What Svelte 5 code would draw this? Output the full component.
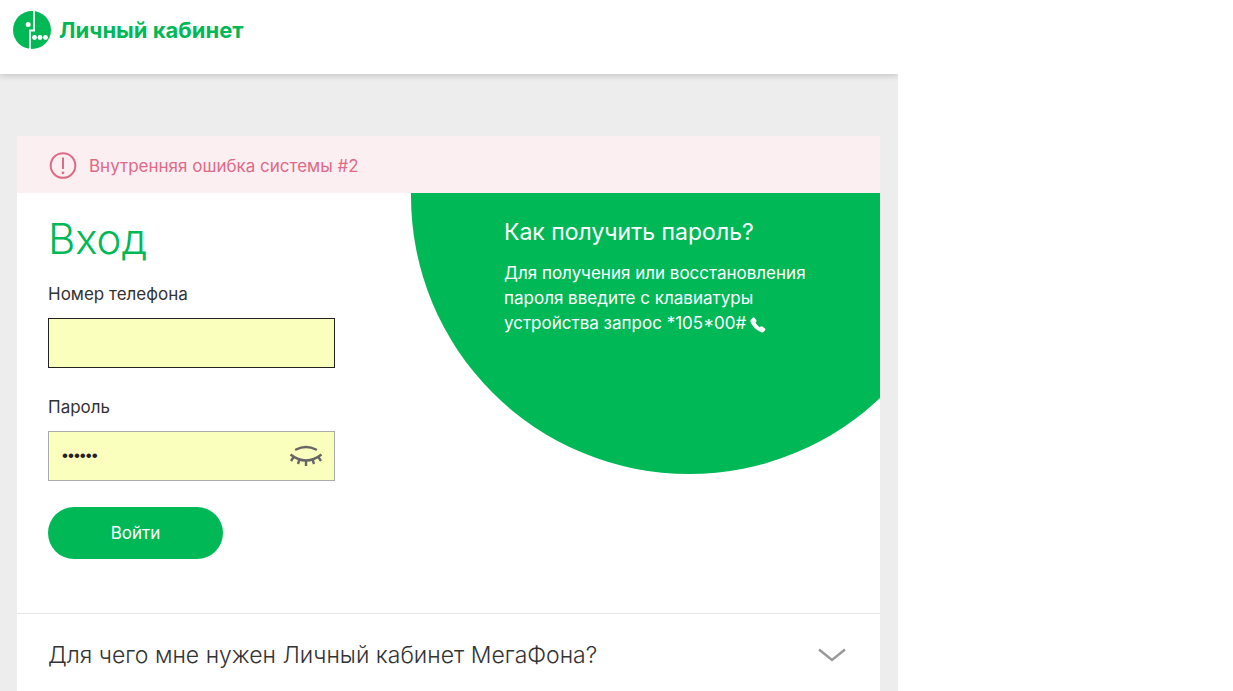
<script lang="ts">
  let phone = $state("");
  let password = $state("123456");
  let showPassword = $state(false);
  let faqOpen = $state(false);
</script>

<svelte:head>
  <title>Личный кабинет</title>
</svelte:head>

<div class="page">
  <header class="header">
    <a href="/" class="logo">
      <svg class="logo-icon" viewBox="0 0 38 38" aria-hidden="true">
        <circle cx="19" cy="19" r="19" fill="#00b956" />
        <path d="M21 0V19.500H17V38" fill="none" stroke="#fff" stroke-width="1.800" />
        <g fill="#fff">
          <circle cx="15.200" cy="13.500" r="2.500" />
          <circle cx="21.500" cy="26.500" r="2.400" />
          <circle cx="27" cy="26.500" r="2.400" />
          <circle cx="32.500" cy="26.500" r="2.400" />
        </g>
      </svg>
      <span>Личный кабинет</span>
    </a>
  </header>

  <main class="card">
    <div class="alert" role="alert">
      <svg class="alert-icon" viewBox="0 0 28 28" fill="none" stroke="currentColor" aria-hidden="true">
        <circle cx="14" cy="13.500" r="12.300" stroke-width="2" />
        <path d="M14 5.500V17" stroke-width="2" />
        <circle cx="14" cy="20.800" r="1.400" fill="currentColor" stroke="none" />
      </svg>
      <span>Внутренняя ошибка системы #2</span>
    </div>

    <div class="login">
      <form class="form" onsubmit={(e) => e.preventDefault()}>
        <h1>Вход</h1>

        <label for="phone">Номер телефона</label>
        <input id="phone" class="input input-active" type="tel" bind:value={phone} />

        <label for="password">Пароль</label>
        <div class="password">
          <input
            id="password"
            class="input"
            type={showPassword ? "text" : "password"}
            bind:value={password}
          />
          <button
            type="button"
            class="eye"
            aria-label="Показать пароль"
            onclick={() => (showPassword = !showPassword)}
          >
            <svg viewBox="0 0 34 24" fill="none" stroke="currentColor" stroke-width="2.400" aria-hidden="true">
              <path d="M7 5.500Q17 0.500 27 5.500" stroke-linecap="round" />
              <path d="M1.500 10.500Q17 22.500 32.500 10.500" />
              <path d="M5 12.500L2 17M10.500 15.500L9 20M17 16.500V22M23.500 15.500L25 20M29 12.500L32 17" />
            </svg>
          </button>
        </div>

        <button type="submit" class="submit">Войти</button>
      </form>

      <section class="hint">
        <div class="hint-text">
          <h2>Как получить пароль?</h2>
          <p>
            Для получения или восстановления пароля введите с клавиатуры устройства запрос *105*00#<svg
              class="phone-icon"
              viewBox="0 0 16 16"
              aria-hidden="true"
            >
              <path
                d="M1.200 2.300L3 0.600Q3.800 0 4.500 0.800L6.300 3.300Q6.800 4.100 6.200 4.800L5.500 5.800Q7 8.400 9.700 10.300L10.800 9.500Q11.500 9 12.200 9.500L15 11.400Q15.800 12.100 15.200 12.900L13.800 14.700Q12.900 15.800 11.200 15.200Q3.200 11.800 0.500 4.700Q0 3.300 1.200 2.300Z"
                fill="currentColor"
              />
            </svg>
          </p>
        </div>
      </section>
    </div>

    <button type="button" class="faq" aria-expanded={faqOpen} onclick={() => (faqOpen = !faqOpen)}>
      <span>Для чего мне нужен Личный кабинет МегаФона?</span>
      <svg class="chevron" class:open={faqOpen} viewBox="0 0 28 14" aria-hidden="true">
        <path d="M1 1.500L14 12L27 1.500" fill="none" stroke="currentColor" stroke-width="2.400" />
      </svg>
    </button>
  </main>
</div>

<style>
  :global(body) {
    background: #fff;
  }

  .page {
    box-sizing: border-box;
    min-height: 100vh;
    margin-right: 335px;
    display: flex;
    flex-direction: column;
    overflow: hidden;
    background: #ededed;
    color: #333;
    font-family: Inter, "Liberation Sans", sans-serif;
    font-size: 17px;
    line-height: 25px;
  }

  h1,
  h2,
  p {
    margin: 0;
  }

  button {
    font-family: inherit;
    border: none;
    cursor: pointer;
  }

  /* Header */
  .header {
    height: 74px;
    padding: 0 13px;
    background: #fff;
    box-shadow: 0 2px 6px rgba(0, 0, 0, 0.16);
  }

  .logo {
    display: inline-flex;
    align-items: center;
    gap: 8px;
    height: 60px;
    color: #00b956;
    font-size: 22px;
    font-weight: 700;
    text-decoration: none;
  }

  .logo-icon {
    width: 38px;
    height: 38px;
  }

  /* Card */
  .card {
    flex: 1;
    display: flex;
    flex-direction: column;
    margin: 62px 18px 0 17px;
    background: #fff;
  }

  .alert {
    display: flex;
    align-items: center;
    gap: 12px;
    padding: 16px 32px 13px;
    background: #fceff1;
    color: #dd6b88;
  }

  .alert-icon {
    width: 28px;
    height: 28px;
  }

  .login {
    display: grid;
    grid-template-columns: minmax(0, 1fr) 469px;
    min-height: 420px;
  }

  .form {
    display: flex;
    flex-direction: column;
    align-items: flex-start;
    padding: 20px 31px 54px;
  }

  h1 {
    margin-bottom: 17px;
    color: #00b956;
    font-size: 42px;
    font-weight: 300;
    line-height: 52px;
  }

  label {
    margin-bottom: 11px;
  }

  .input {
    box-sizing: border-box;
    width: 287px;
    height: 50px;
    margin-bottom: 27px;
    padding: 0 13px;
    border: 1px solid #aaa;
    border-radius: 0;
    background: #faffbd;
    color: #222;
    font-family: "Liberation Sans", sans-serif;
    font-size: 17px;
    outline: none;
  }

  .input-active {
    border-color: #222;
  }

  .password {
    position: relative;
  }

  .password .input {
    margin-bottom: 26px;
  }

  .eye {
    position: absolute;
    top: 13px;
    right: 12px;
    padding: 0;
    background: none;
    color: #666;
  }

  .eye svg {
    display: block;
    width: 34px;
    height: 24px;
  }

  .submit {
    width: 175px;
    height: 52px;
    border-radius: 26px;
    background: #00b956;
    color: #fff;
    font-size: 17px;
  }

  /* Password hint on the green circle */
  .hint {
    position: relative;
    overflow: hidden;
    color: #fff;
  }

  .hint::before {
    content: "";
    position: absolute;
    top: -275px;
    left: 0;
    width: 556px;
    height: 556px;
    border-radius: 50%;
    background: #00b956;
  }

  .hint-text {
    position: relative;
    max-width: 310px;
    padding: 24px 0 0 93px;
  }

  h2 {
    margin-bottom: 14px;
    font-size: 23px;
    font-weight: 400;
    line-height: 30px;
  }

  .phone-icon {
    width: 16px;
    height: 16px;
    margin-left: 4px;
    vertical-align: -4px;
  }

  /* FAQ */
  .faq {
    display: flex;
    align-items: center;
    justify-content: space-between;
    padding: 26px 34px 24px 31px;
    border-top: 1px solid #e5e5e5;
    background: none;
    color: #333;
    font-size: 23px;
    font-weight: 300;
    line-height: 30px;
    text-align: left;
  }

  .chevron {
    width: 28px;
    height: 14px;
    color: #999;
  }

  .chevron.open {
    transform: rotate(180deg);
  }

  @media (max-width: 1000px) {
    .page {
      margin-right: 0;
    }
  }

  @media (max-width: 820px) {
    .login {
      grid-template-columns: minmax(0, 1fr);
    }

    .hint {
      min-height: 281px;
    }
  }
</style>
